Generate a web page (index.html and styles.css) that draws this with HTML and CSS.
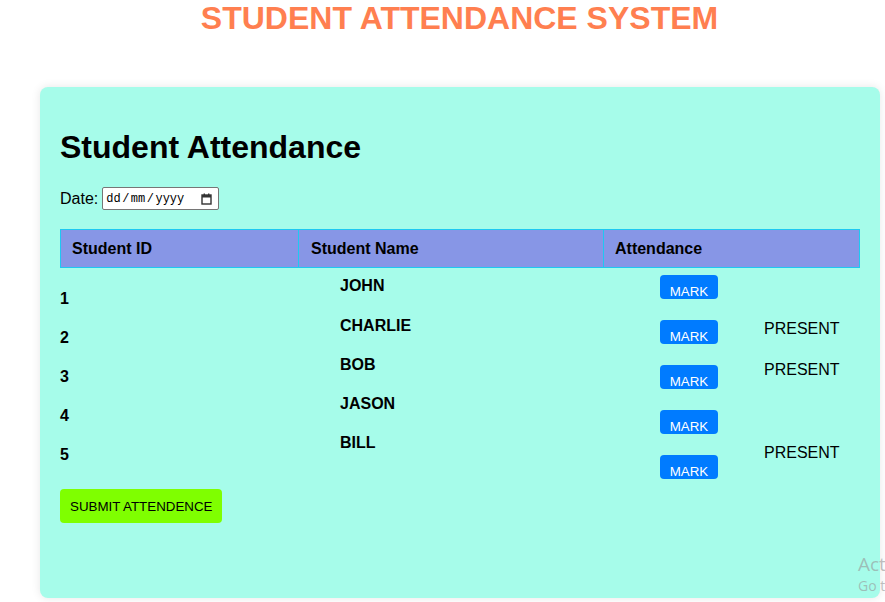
FILE: index.html
```html
<!DOCTYPE html>
<html>
<head>
<meta charset="utf-8">
<title>Student Attendance System</title>
<link rel="stylesheet" href="styles.css">
</head>
<body>
<header class="site-header">
  <h1 class="site-title">STUDENT ATTENDANCE SYSTEM</h1>
</header>
<main class="card">
  <h2 class="card-title">Student Attendance</h2>
  <div class="date-row">
    <label class="date-label" for="date">Date:</label>
    <div class="date-input" id="date">
      <span class="date-text">dd<span class="slash">/</span>mm<span class="slash">/</span>yyyy</span>
      <svg class="cal-icon" width="11" height="12" viewBox="0 0 11 12">
        <rect x="1" y="2" width="9" height="9" fill="none" stroke="#333" stroke-width="1.4"/>
        <rect x="1" y="2" width="9" height="2.5" fill="#333"/>
        <rect x="2.6" y="0.5" width="1.4" height="2" fill="#333"/>
        <rect x="7" y="0.5" width="1.4" height="2" fill="#333"/>
      </svg>
    </div>
  </div>
  <div class="table">
    <div class="thead">
      <div class="th th-id">Student ID</div>
      <div class="th th-name">Student Name</div>
      <div class="th th-att">Attendance</div>
    </div>
    <div class="tbody">
      <div class="col col-id">
        <div class="id-cell">1</div>
        <div class="id-cell">2</div>
        <div class="id-cell">3</div>
        <div class="id-cell">4</div>
        <div class="id-cell">5</div>
      </div>
      <div class="col col-name">
        <div class="name-cell">JOHN</div>
        <div class="name-cell">CHARLIE</div>
        <div class="name-cell">BOB</div>
        <div class="name-cell">JASON</div>
        <div class="name-cell">BILL</div>
      </div>
      <div class="col col-att">
        <div class="btn-col">
          <button class="mark-btn">MARK</button>
          <button class="mark-btn">MARK</button>
          <button class="mark-btn">MARK</button>
          <button class="mark-btn">MARK</button>
          <button class="mark-btn">MARK</button>
        </div>
        <div class="status-col">
          <div class="status-cell"></div>
          <div class="status-cell">PRESENT</div>
          <div class="status-cell">PRESENT</div>
          <div class="status-cell"></div>
          <div class="status-cell">PRESENT</div>
        </div>
      </div>
    </div>
  </div>
  <button class="submit-btn">SUBMIT ATTENDENCE</button>
</main>
<div class="watermark">
  <div class="wm-title">Activate Windows</div>
  <div class="wm-sub">Go to Settings to activate Windows.</div>
</div>
</body>
</html>
```
FILE: styles.css
```css
html, body {
  margin: 0;
  padding: 0;
  background: #ffffff;
  overflow: hidden;
  height: 602px;
}
body {
  font-family: "Liberation Sans", Arial, sans-serif;
  color: #000;
  position: relative;
}
.site-header {
  padding-left: 34px;
}
.site-title {
  margin: 0;
  font-size: 32px;
  line-height: 37px;
  font-weight: bold;
  color: #ff7f50;
  text-align: center;
}
.card {
  margin: 50px 0 0 40px;
  width: 840px;
  height: 511px;
  box-sizing: border-box;
  padding: 20px;
  background: #a6fcea;
  border-radius: 8px;
  box-shadow: 0 0 10px rgba(0, 0, 0, 0.1);
}
.card-title {
  margin: 21.5px 0 21.5px;
  font-size: 32px;
  line-height: 37px;
  font-weight: bold;
}
.date-row {
  display: flex;
  align-items: center;
  height: 23px;
  gap: 4px;
}
.date-label {
  font-size: 16px;
}
.date-input {
  box-sizing: border-box;
  width: 117px;
  height: 23px;
  display: flex;
  align-items: center;
  justify-content: space-between;
  padding: 0 6px 0 3px;
  border: 1px solid #767676;
  border-radius: 2px;
  background: #fff;
}
.date-text {
  font-family: "Liberation Mono", "DejaVu Sans Mono", monospace;
  font-size: 12px;
  color: #000;
  line-height: 14px;
}
.slash {
  margin: 0 1.5px;
}
.cal-icon {
  display: block;
}
.table {
  margin-top: 19px;
  width: 800px;
}
.thead {
  display: grid;
  grid-template-columns: 237px 305px 1fr;
  height: 39px;
  box-sizing: border-box;
  background: #8796e6;
  border: 1px solid #1ec8f2;
}
.th {
  box-sizing: border-box;
  font-size: 16px;
  font-weight: bold;
  line-height: 37px;
  padding-left: 11px;
}
.th-name,
.th-att {
  border-left: 1px solid #1ec8f2;
}
.th-name { padding-left: 12px; }
.tbody {
  display: flex;
  align-items: flex-start;
}
.col {
  display: flex;
  flex-direction: column;
  flex-shrink: 0;
}
.col-id {
  width: 238px;
  padding-top: 10.7px;
}
.id-cell {
  height: 39.2px;
  line-height: 39.2px;
  font-size: 16px;
  font-weight: bold;
}
.col-name {
  width: 262px;
  padding-left: 42px;
  margin-top: -1.6px;
}
.name-cell {
  height: 39.2px;
  line-height: 39.2px;
  font-size: 16px;
  font-weight: bold;
}
.col-att {
  flex: 1;
  display: flex;
  flex-direction: row;
  align-items: flex-start;
}
.btn-col {
  display: flex;
  flex-direction: column;
  gap: 21px;
  margin-left: 58px;
  padding-top: 7px;
}
.mark-btn {
  box-sizing: border-box;
  height: 24px;
  width: 58px;
  padding: 9px 0 0;
  border: none;
  border-radius: 4px;
  background: #007bff;
  color: #fff;
  font-family: "Liberation Sans", Arial, sans-serif;
  font-size: 13.33px;
  line-height: 15px;
  text-align: center;
}
.status-col {
  display: flex;
  flex-direction: column;
  margin-left: 46px;
  margin-top: -1.5px;
}
.status-cell {
  height: 41.3px;
  line-height: 41.3px;
  font-size: 16px;
}
.submit-btn {
  display: block;
  margin-top: 10px;
  height: 34px;
  padding: 0 10px;
  border: none;
  border-radius: 4px;
  background: #7fff00;
  color: #000;
  font-family: "Liberation Sans", Arial, sans-serif;
  font-size: 13.33px;
}
.watermark {
  position: absolute;
  left: 858px;
  top: 552px;
  color: rgba(150, 150, 150, 0.6);
  font-family: "Open Sans", "Noto Sans", sans-serif;
  white-space: nowrap;
}
.wm-title {
  font-size: 19px;
  line-height: 24px;
}
.wm-sub {
  font-size: 14px;
  line-height: 20px;
}
```
